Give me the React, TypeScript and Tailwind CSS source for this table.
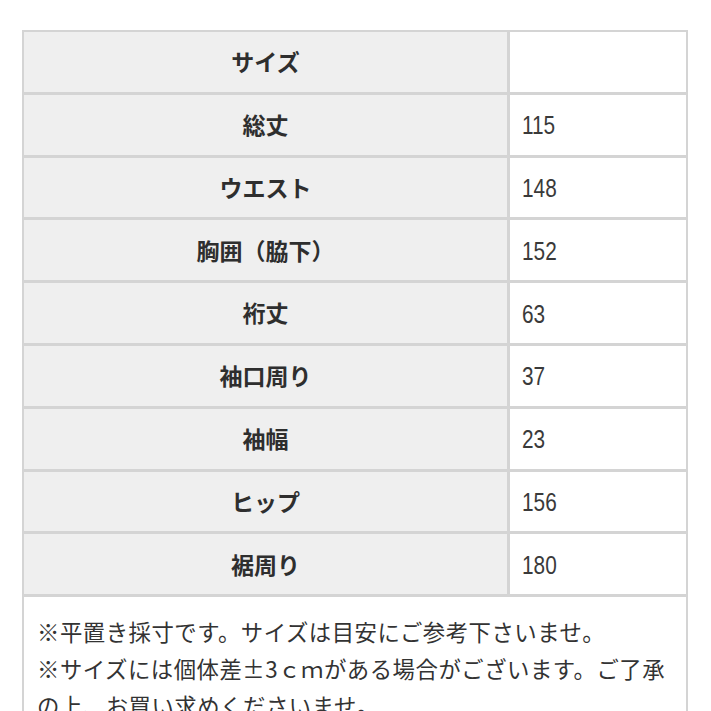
import React from "react";

const rows: [string, string][] = [
  ["サイズ", ""],
  ["総丈", "115"],
  ["ウエスト", "148"],
  ["胸囲（脇下）", "152"],
  ["裄丈", "63"],
  ["袖口周り", "37"],
  ["袖幅", "23"],
  ["ヒップ", "156"],
  ["裾周り", "180"],
];

export default function App() {
  return (
    <div className="w-[711px] h-[711px] overflow-hidden bg-white pt-[30px] pl-[22px]">
      <div className="w-[666px] border-x-2 border-t-2 border-[#d4d4d4]">
        {rows.map(([label, value], i) => (
          <div
            key={i}
            className="flex h-[62.8px] border-b-[3px] border-[#d4d4d4]"
          >
            <div
              className="w-[486px] flex items-center justify-center pb-[1px] bg-[#efefef] border-r-[3px] border-[#d4d4d4] text-[23px] font-bold text-[#2e2e2e]"
              style={{ fontFamily: '"Noto Sans CJK JP", sans-serif' }}
            >
              {label}
            </div>
            <div
              className="flex-1 flex items-center pl-[12px] pt-[2px] bg-white text-[26px] text-[#3a3a3a]"
              style={{ fontFamily: '"Liberation Sans", sans-serif' }}
            >
              <span className="inline-block origin-left scale-x-[0.8]">{value}</span>
            </div>
          </div>
        ))}
        <div
          className="pl-[13px] pr-[8px] pt-[16px] pb-4 text-[22.4px] leading-[37px] tracking-[0.5px] text-[#333333]"
          style={{ fontFamily: '"Noto Sans CJK JP", sans-serif' }}
        >
          <p>※平置き採寸です。サイズは目安にご参考下さいませ。</p>
          <p>
            ※サイズには個体差±3ｃｍがある場合がございます。ご了承
            <br />
            の上、お買い求めくださいませ。
          </p>
        </div>
      </div>
    </div>
  );
}
